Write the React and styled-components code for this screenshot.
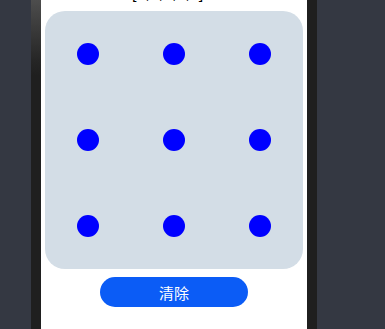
import React, { useState } from 'react';
import styled, { createGlobalStyle } from 'styled-components';

const GlobalStyle = createGlobalStyle`
  html, body {
    margin: 0;
    padding: 0;
    background: #343842;
    overflow: hidden;
  }
`;

const Stage = styled.div`
  display: flex;
  height: 329px;
  padding-left: 31px;
`;

const Frame = styled.div`
  width: 266px;
  padding: 0 10px;
  background-color: #1f1f1f;
  background-image: linear-gradient(#4d4d4d, #262626 60px, #1f1f1f 75px);
  background-size: 10px 100%;
  background-repeat: no-repeat;
`;

const Screen = styled.div`
  display: flex;
  flex-direction: column;
  align-items: center;
  height: calc(100% + 15px);
  margin-top: -15px;
  background: #fff;
`;

const Output = styled.div`
  padding-right: 13px;
  font: 16px/18px 'Liberation Sans', Arial, sans-serif;
  color: #000;
`;

const Pad = styled.div`
  margin-top: 8px;
  width: 258px;
  height: 258px;
  display: grid;
  grid-template-columns: repeat(3, 1fr);
  grid-template-rows: repeat(3, 1fr);
  place-items: center;
  border-radius: 20px;
  background: #d3dde6;
`;

const Dot = styled.div`
  width: 22px;
  height: 22px;
  border-radius: 50%;
  background: ${(p) => (p.$active ? '#ff3b30' : '#0000ff')};
`;

const ClearButton = styled.button`
  margin-top: 8px;
  width: 148px;
  height: 30px;
  border: none;
  border-radius: 15px;
  background: #0b5cf6;
  color: #fff;
  font: 15px 'Noto Sans CJK SC', 'Noto Sans', sans-serif;
  cursor: pointer;
`;

export default function App() {
  const [path, setPath] = useState([0, 1, 2, 4, 8]);

  return (
    <>
      <GlobalStyle />
      <Stage>
        <Frame>
          <Screen>
            <Output>{JSON.stringify(path)}</Output>
            <Pad>
              {Array.from({ length: 9 }, (_, i) => (
                <Dot key={i} />
              ))}
            </Pad>
            <ClearButton onClick={() => setPath([])}>清除</ClearButton>
          </Screen>
        </Frame>
      </Stage>
    </>
  );
}
